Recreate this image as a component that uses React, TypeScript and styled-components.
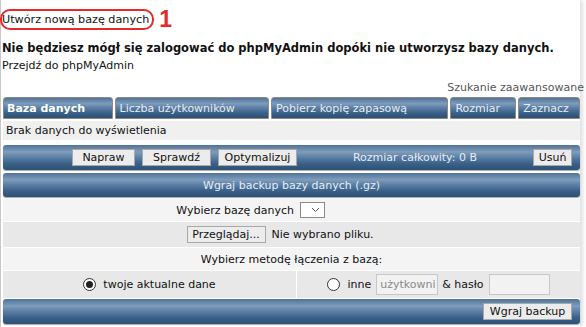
import React from "react";
import styled, { createGlobalStyle } from "styled-components";

const Global = createGlobalStyle`
  html, body { margin: 0; padding: 0; background: #fff; }
  body { font-family: "DejaVu Sans", Verdana, sans-serif; font-size: 11px; color: #111; }
`;

const Page = styled.div`
  width: 579px;
  height: 327px;
  border-left: 1px solid #c8c8c8;
  box-shadow: 3px 0 4px rgba(0,0,0,0.12);
  background: #fff;
  display: flex;
  flex-direction: column;
`;

const TopLine = styled.div`
  display: flex;
  align-items: center;
  padding-top: 9px;
  height: 21px;
`;

const Annotated = styled.span`
  border: 2px solid #e42a2a;
  border-radius: 10px;
  padding: 0 3px 0 0;
  margin-left: -1px;
  height: 17px;
  line-height: 17px;
  font-size: 11.2px;
`;

const Mark = styled.span`
  font-family: "Liberation Sans", Arial, sans-serif;
  color: #e42a2a;
  font-weight: bold;
  font-size: 23px;
  margin-left: 5px;
  line-height: 21px;
`;

const Warning = styled.div`
  font-weight: bold;
  margin-top: 10px;
  padding-left: 1px;
  line-height: 17px;
  font-size: 11.5px;
  white-space: nowrap;
`;

const Plain = styled.div`
  padding-left: 1px;
  line-height: 17px;
`;

const SearchLink = styled.div`
  text-align: right;
  color: #555;
  margin-top: 5px;
  line-height: 17px;
  margin-right: -4px;
  white-space: nowrap;
`;

const blue = `
  background: linear-gradient(to bottom, #4f7398 0%, #7f9cbb 28%, #5a7ea4 50%, #3b6088 75%, #2d5074 100%);
  color: #e6edf4;
`;

const Table = styled.div`
  margin: 0 0 0 2px;
  display: flex;
  flex-direction: column;
  background: #fff;
`;

const TabRow = styled.div`
  display: flex;
  gap: 2px;
  margin-top: 1px;
`;

const Tab = styled.div<{ $w: number; $bold?: boolean }>`
  ${blue}
  width: ${(p) => p.$w}px;
  height: 22px;
  box-sizing: border-box;
  border: 1px solid #8a8a8a;
  border-radius: 3px 3px 0 0;
  display: flex;
  align-items: center;
  padding-left: ${(p) => (p.$bold ? 3 : 4)}px;
  font-weight: ${(p) => (p.$bold ? "bold" : "normal")};
  color: ${(p) => (p.$bold ? "#fff" : "#e6edf4")};
  white-space: nowrap;
`;

const Row = styled.div<{ $h: number; $bg: string; $gap: number; $justify?: string }>`
  height: ${(p) => p.$h}px;
  margin-top: ${(p) => p.$gap}px;
  background: ${(p) => p.$bg};
  display: flex;
  align-items: center;
  justify-content: ${(p) => p.$justify || "center"};
  padding: 0 3px;
`;

const Bar = styled.div<{ $h: number; $gap: number }>`
  ${blue}
  height: ${(p) => p.$h}px;
  margin-top: ${(p) => p.$gap}px;
  border-radius: 3px;
  box-shadow: 0 1px 1px rgba(0,0,0,0.35);
  display: flex;
  align-items: center;
`;

const Spacer = styled.span<{ $w?: number }>`
  ${(p) => (p.$w ? `width: ${p.$w}px; flex: none;` : "flex: 1;")}
`;

const Btn = styled.span<{ $w: number }>`
  display: inline-flex;
  align-items: center;
  justify-content: center;
  box-sizing: border-box;
  width: ${(p) => p.$w}px;
  height: 17px;
  background: #ececec;
  border: 1px solid #a8a8a8;
  color: #111;
  font-size: 11px;
  white-space: nowrap;
`;

const BarCenter = styled.div`
  flex: 1;
  text-align: center;
  color: #e6edf4;
`;

const Select = styled.span`
  display: inline-flex;
  align-items: center;
  justify-content: flex-end;
  box-sizing: border-box;
  width: 25px;
  height: 16px;
  border: 1px solid #8a8a8a;
  background: #fff;
  padding-right: 4px;
`;

const FileInput = styled.div`
  width: 210px;
  display: flex;
  align-items: center;
  gap: 6px;
`;

const Radio = styled.span<{ $checked?: boolean }>`
  display: inline-flex;
  align-items: center;
  justify-content: center;
  box-sizing: border-box;
  width: 13px;
  height: 13px;
  border-radius: 50%;
  border: 1px solid #333;
  background: #fff;
  margin-right: 7px;
  &::after {
    content: "";
    width: 7px;
    height: 7px;
    border-radius: 50%;
    background: ${(p) => (p.$checked ? "#222" : "transparent")};
  }
`;

const Cell = styled.div<{ $w?: number; $align?: string }>`
  display: flex;
  align-items: center;
  justify-content: ${(p) => p.$align || "center"};
  height: 100%;
  box-sizing: border-box;
  padding: 0 2px;
  ${(p) => (p.$w ? `width: ${p.$w}px; flex: none;` : "flex: 1;")}
`;

const SplitRow = styled.div<{ $h: number; $bg: string; $gap: number; $line?: boolean }>`
  height: ${(p) => p.$h}px;
  margin-top: ${(p) => p.$gap}px;
  background: ${(p) => p.$bg};
  display: flex;
  gap: ${(p) => (p.$line ? 1 : 0)}px;
  ${(p) => (p.$line ? "background-clip: padding-box;" : "")}
`;

const Divider = styled.div`
  width: 1px;
  background: #fff;
`;

const Input = styled.span<{ $w: number }>`
  display: inline-flex;
  align-items: center;
  box-sizing: border-box;
  width: ${(p) => p.$w}px;
  height: 21px;
  border: 1px solid #c8c8c8;
  background: #f2f2f2;
  color: #8a8a8a;
  padding-left: 3px;
  overflow: hidden;
  white-space: nowrap;
`;

const Amp = styled.span`
  margin: 0 5px 0 4px;
  color: #111;
`;

export default function App() {
  return (
    <>
      <Global />
      <Page>
        <TopLine>
          <Annotated>Utwórz nową bazę danych</Annotated>
          <Mark>1</Mark>
        </TopLine>
        <Warning>Nie będziesz mógł się zalogować do phpMyAdmin dopóki nie utworzysz bazy danych.</Warning>
        <Plain>Przejdź do phpMyAdmin</Plain>
        <SearchLink>Szukanie zaawansowane</SearchLink>
        <Table>
          <TabRow>
            <Tab $w={110} $bold>Baza danych</Tab>
            <Tab $w={155}>Liczba użytkowników</Tab>
            <Tab $w={178}>Pobierz kopię zapasową</Tab>
            <Tab $w={66}>Rozmiar</Tab>
            <Tab $w={62}>Zaznacz</Tab>
          </TabRow>
          <Row $h={19} $gap={2} $bg="#f0f0f0" $justify="flex-start">Brak danych do wyświetlenia</Row>
          <Bar $h={25} $gap={5}>
            <Spacer $w={69} />
            <Btn $w={63}>Napraw</Btn>
            <Spacer $w={7} />
            <Btn $w={69}>Sprawdź</Btn>
            <Spacer $w={7} />
            <Btn $w={79}>Optymalizuj</Btn>
            <BarCenter>Rozmiar całkowity: 0 B</BarCenter>
            <Btn $w={39}>Usuń</Btn>
            <Spacer $w={8} />
          </Bar>
          <Bar $h={24} $gap={3}>
            <BarCenter>Wgraj backup bazy danych (.gz)</BarCenter>
          </Bar>
          <SplitRow $h={22} $gap={2} $bg="#f4f4f4">
            <Cell $w={293} $align="flex-end">Wybierz bazę danych</Cell>
            <Cell $align="flex-start" style={{ paddingLeft: 4 }}>
              <Select>
                <svg width="9" height="6" viewBox="0 0 9 6">
                  <path d="M1 1 L4.5 4.5 L8 1" fill="none" stroke="#555" strokeWidth="1" />
                </svg>
              </Select>
            </Cell>
          </SplitRow>
          <Row $h={25} $gap={1} $bg="#e8e8e8">
            <FileInput>
              <Btn $w={79}>Przeglądaj...</Btn>
              <span>Nie wybrano pliku.</span>
            </FileInput>
          </Row>
          <Row $h={22} $gap={1} $bg="#f4f4f4">Wybierz metodę łączenia z bazą:</Row>
          <SplitRow $h={27} $gap={1} $bg="#e8e8e8">
            <Cell $w={293}>
              <Radio $checked />
              twoje aktualne dane
            </Cell>
            <Divider />
            <Cell>
              <Radio />
              inne
              <Spacer $w={5} />
              <Input $w={62}>użytkowni</Input>
              <Amp>&amp; hasło</Amp>
              <Input $w={61} />
            </Cell>
          </SplitRow>
          <Bar $h={25} $gap={1}>
            <Spacer />
            <Btn $w={89}>Wgraj backup</Btn>
            <Spacer $w={8} />
          </Bar>
        </Table>
      </Page>
    </>
  );
}
